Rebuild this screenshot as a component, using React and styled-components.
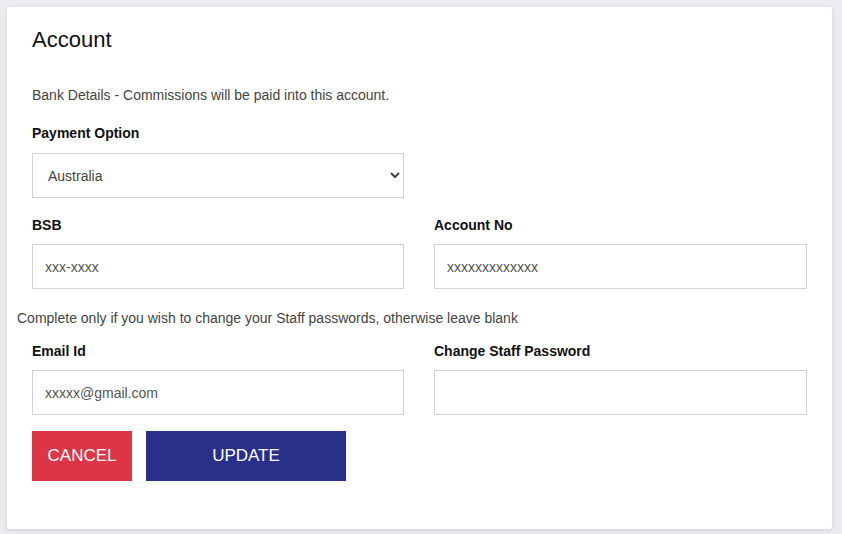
import styled, { createGlobalStyle } from "styled-components";

const GlobalStyle = createGlobalStyle`
  html, body {
    margin: 0;
    background: #ececf0;
    font-family: "Liberation Sans", Arial, sans-serif;
  }
  * {
    box-sizing: border-box;
  }
`;

const Page = styled.div`
  padding: 7px 10px 6px 7px;
`;

const Card = styled.div`
  background: #fff;
  border-radius: 3px;
  box-shadow: 0 1px 4px rgba(0, 0, 0, 0.12);
  padding: 20px 25px 48px 25px;
`;

const Title = styled.h2`
  margin: 0;
  font-size: 22px;
  font-weight: 400;
  line-height: 26px;
  color: #111;
`;

const Note = styled.p`
  margin: ${(p) => p.$top}px 0 0 ${(p) => p.$shift || 0}px;
  font-size: 14px;
  line-height: 20px;
  color: #444;
`;

const Label = styled.label`
  display: block;
  font-size: 14px;
  font-weight: 700;
  line-height: 20px;
  color: #111;
  margin-bottom: ${(p) => p.$gap || 9}px;
`;

const Field = styled.div`
  margin-top: ${(p) => p.$top || 0}px;
`;

const Row = styled.div`
  display: grid;
  grid-template-columns: 372px 373px;
  column-gap: 30px;
  margin-top: ${(p) => p.$top}px;
`;

const Select = styled.select`
  display: block;
  width: 372px;
  height: 45px;
  padding: 0 10px 0 11px;
  border: 1px solid #d3d3d3;
  border-radius: 0;
  background: #fff;
  font-family: "Liberation Sans", Arial, sans-serif;
  font-size: 14px;
  color: #444;
  outline: none;
`;

const Input = styled.input`
  display: block;
  width: 100%;
  height: 45px;
  padding: 0 12px;
  border: 1px solid #d3d3d3;
  border-radius: 0;
  font-family: "Liberation Sans", Arial, sans-serif;
  font-size: 14px;
  color: #444;
  outline: none;

  &::placeholder {
    color: #555;
  }
`;

const Actions = styled.div`
  display: flex;
  gap: 14px;
  margin-top: 16px;
`;

const Button = styled.button`
  width: ${(p) => p.$width}px;
  height: 50px;
  border: none;
  border-radius: 0;
  background: ${(p) => p.$bg};
  color: #fff;
  font-family: "Liberation Sans", Arial, sans-serif;
  font-size: 17px;
  cursor: pointer;
`;

export default function App() {
  return (
    <>
      <GlobalStyle />
      <Page>
        <Card>
          <Title>Account</Title>
          <Note $top={32}>Bank Details - Commissions will be paid into this account.</Note>

          <Field $top={18}>
            <Label $gap={10}>Payment Option</Label>
            <Select defaultValue="Australia">
              <option>Australia</option>
              <option>New Zealand</option>
            </Select>
          </Field>

          <Row $top={17}>
            <Field>
              <Label>BSB</Label>
              <Input placeholder="xxx-xxxx" />
            </Field>
            <Field>
              <Label>Account No</Label>
              <Input placeholder="xxxxxxxxxxxxx" />
            </Field>
          </Row>

          <Note $top={19} $shift={-15}>
            Complete only if you wish to change your Staff passwords, otherwise leave blank
          </Note>

          <Row $top={13}>
            <Field>
              <Label $gap={9}>Email Id</Label>
              <Input placeholder="xxxxx@gmail.com" />
            </Field>
            <Field>
              <Label $gap={9}>Change Staff Password</Label>
              <Input type="password" />
            </Field>
          </Row>

          <Actions>
            <Button type="button" $width={100} $bg="#dc3545">
              CANCEL
            </Button>
            <Button type="button" $width={200} $bg="#29308a">
              UPDATE
            </Button>
          </Actions>
        </Card>
      </Page>
    </>
  );
}
